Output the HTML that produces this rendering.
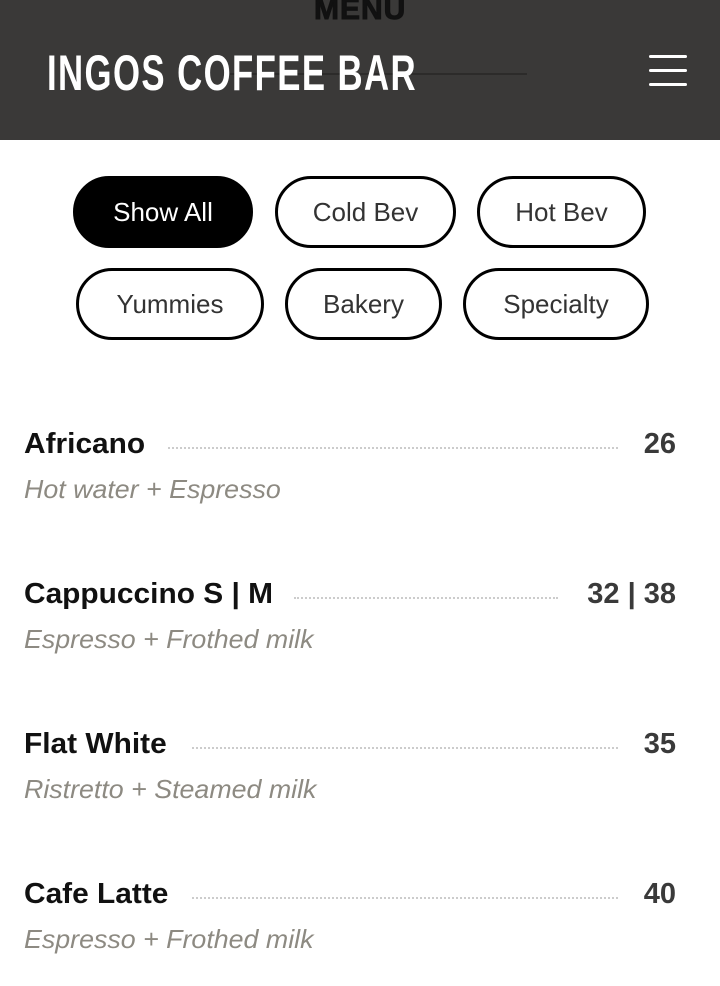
<!DOCTYPE html>
<html><head><style>
body{margin:0;width:720px;height:986px;background:#fff;font-family:"Liberation Sans",sans-serif;overflow:hidden;position:relative}
.hdr{position:absolute;left:0;top:0;width:720px;height:140px;background:#3a3938}
.menu{position:absolute;left:314px;top:-7px;font:bold 30px "Liberation Sans Narrow","Liberation Sans",sans-serif;color:#111;letter-spacing:1px;-webkit-text-stroke:1px #111}
.line{position:absolute;left:230px;top:73px;width:297px;height:2px;background:#2c2b2a}
.title{position:absolute;left:47px;top:44px;font:bold 50px "Liberation Sans Narrow","Liberation Sans",sans-serif;color:#fff;letter-spacing:2px;transform-origin:left top;white-space:nowrap}
.hb{position:absolute;left:649px;width:38px;height:3px;background:#fff;border-radius:2px}
.btn{position:absolute;height:66px;border:3px solid #000;border-radius:36px;box-sizing:content-box;font-size:26px;color:#333;display:flex;align-items:center;justify-content:center}
.btn.on{background:#000;color:#fff}
.item{position:absolute;left:24px;width:652px}
.name{position:absolute;left:0;top:0;font-weight:bold;font-size:29px;color:#111;transform:scaleX(1.03);transform-origin:left}
.price{position:absolute;right:0;top:0;font-weight:bold;font-size:29px;color:#3a3a3a}
.dots{position:absolute;top:19px;border-top:2px dotted #ccc}
.desc{position:absolute;left:0;top:46px;font-style:italic;font-size:26px;color:#8d8a82;transform:scaleX(1.03);transform-origin:left}
</style></head><body>
<div class="hdr">
<div class="menu">MENU</div>
<div class="line"></div>
<div class="title" id="t">INGOS COFFEE BAR</div>
<div class="hb" style="top:55px"></div><div class="hb" style="top:69px"></div><div class="hb" style="top:83px"></div>
</div>
<div class="btn on" style="left:73px;top:176px;width:174px">Show All</div>
<div class="btn" style="left:275px;top:176px;width:175px">Cold Bev</div>
<div class="btn" style="left:477px;top:176px;width:163px">Hot Bev</div>
<div class="btn" style="left:76px;top:268px;width:182px">Yummies</div>
<div class="btn" style="left:285px;top:268px;width:151px">Bakery</div>
<div class="btn" style="left:463px;top:268px;width:180px">Specialty</div>

<div class="item" style="top:428px"><div class="name">Africano</div><div class="dots" style="left:144px;right:58px"></div><div class="price">26</div><div class="desc">Hot water + Espresso</div></div>
<div class="item" style="top:578px"><div class="name">Cappuccino S | M</div><div class="dots" style="left:270px;right:118px"></div><div class="price">32 | 38</div><div class="desc">Espresso + Frothed milk</div></div>
<div class="item" style="top:728px"><div class="name">Flat White</div><div class="dots" style="left:168px;right:58px"></div><div class="price">35</div><div class="desc">Ristretto + Steamed milk</div></div>
<div class="item" style="top:878px"><div class="name">Cafe Latte</div><div class="dots" style="left:168px;right:58px"></div><div class="price">40</div><div class="desc">Espresso + Frothed milk</div></div>
<script>
var t=document.getElementById('t');var w=t.offsetWidth;t.style.transform='scaleX('+(370/w)+')';
</script>
</body></html>
